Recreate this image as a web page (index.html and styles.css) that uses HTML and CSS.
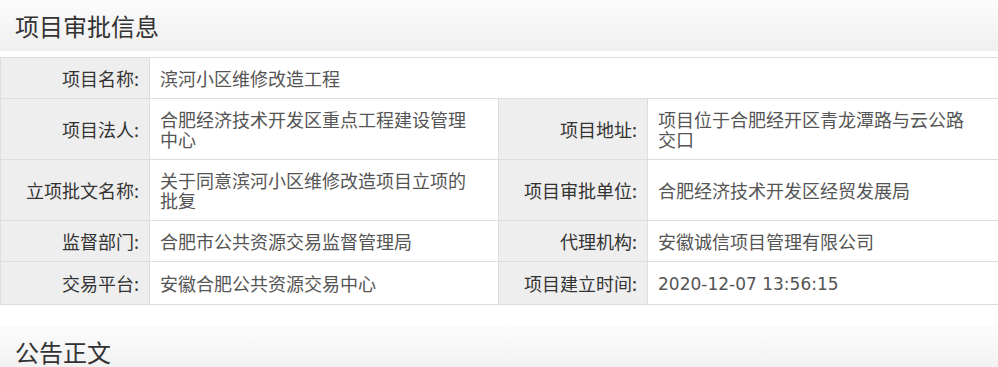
FILE: index.html
```html
<!DOCTYPE html>
<html lang="zh-CN">
<head>
<meta charset="utf-8">
<title>项目审批信息</title>
<link rel="stylesheet" href="styles.css">
</head>
<body>
<div class="page">
  <h2 class="section-title">项目审批信息</h2>
  <table class="info-table">
    <colgroup>
      <col class="col-label">
      <col class="col-value">
      <col class="col-label">
      <col class="col-value2">
    </colgroup>
    <tbody>
      <tr>
        <th>项目名称:</th>
        <td colspan="3">滨河小区维修改造工程</td>
      </tr>
      <tr>
        <th>项目法人:</th>
        <td>合肥经济技术开发区重点工程建设管理中心</td>
        <th>项目地址:</th>
        <td>项目位于合肥经开区青龙潭路与云公路交口</td>
      </tr>
      <tr>
        <th>立项批文名称:</th>
        <td>关于同意滨河小区维修改造项目立项的批复</td>
        <th>项目审批单位:</th>
        <td>合肥经济技术开发区经贸发展局</td>
      </tr>
      <tr>
        <th>监督部门:</th>
        <td>合肥市公共资源交易监督管理局</td>
        <th>代理机构:</th>
        <td>安徽诚信项目管理有限公司</td>
      </tr>
      <tr>
        <th>交易平台:</th>
        <td>安徽合肥公共资源交易中心</td>
        <th>项目建立时间:</th>
        <td><span class="time">2020-12-07 13:56:15</span></td>
      </tr>
    </tbody>
  </table>
  <h2 class="section-title section-gap">公告正文</h2>
</div>
</body>
</html>
```

FILE: styles.css
```css
html, body {
  margin: 0;
  padding: 0;
  background: #fff;
}

.page {
  width: 998px;
  font-family: "Microsoft YaHei", "Noto Sans CJK SC", sans-serif;
}

.section-title {
  margin: 0;
  height: 51px;
  line-height: 51px;
  padding-left: 15px;
  font-size: 24px;
  font-weight: normal;
  color: #333;
  background: linear-gradient(to bottom, #fcfcfc, #efefef);
}

.section-gap {
  margin-top: 21px;
}

.info-table {
  margin-top: 6px;
  width: 998px;
  table-layout: fixed;
  border-collapse: collapse;
  font-size: 18px;
  line-height: 20px;
}

.col-label { width: 149px; }
.col-value { width: 349px; }
.col-value2 { width: 351px; }

.info-table th,
.info-table td {
  border: 1px solid #ddd;
  padding: 10px 20px 10px 10px;
  vertical-align: middle;
}

.info-table th {
  background: #eee;
  color: #333;
  font-weight: normal;
  text-align: right;
  padding-right: 10px;
  white-space: nowrap;
}

.info-table td {
  color: #555;
  text-align: left;
  word-break: break-all;
}

.time {
  font-family: "DejaVu Sans", "Noto Sans", sans-serif;
  font-size: 17px;
}
```
